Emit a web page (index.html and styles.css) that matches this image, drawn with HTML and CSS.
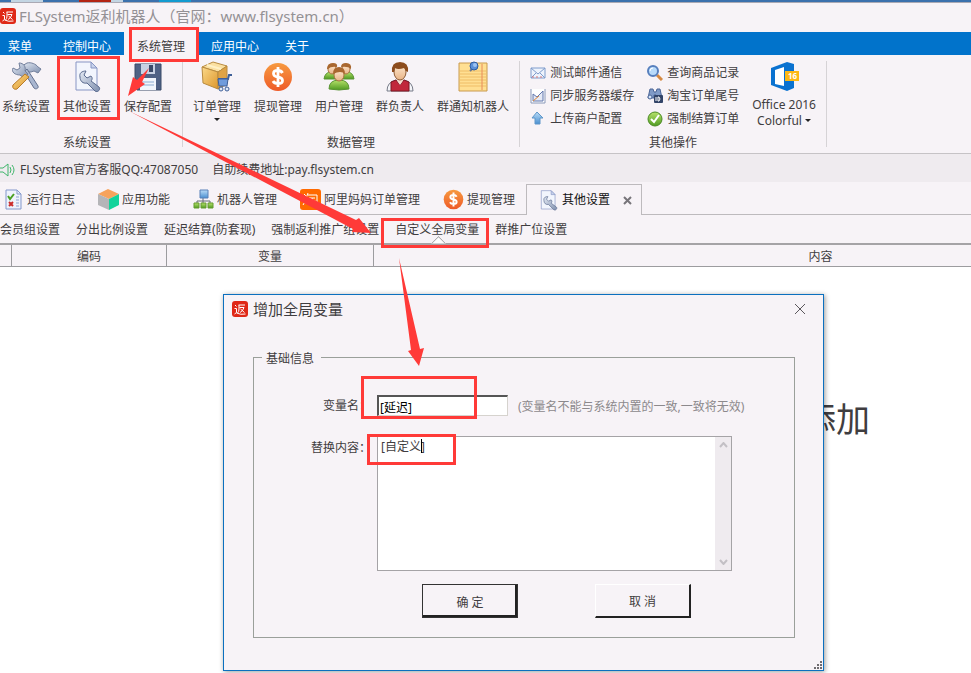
FILE: index.html
```html
<!DOCTYPE html>
<html lang="zh-CN">
<head>
  <meta charset="UTF-8">
  <meta name="viewport" content="width=device-width, initial-scale=1.0">
  <title>FLSystem返利机器人</title>
  <link rel="stylesheet" href="styles.css">
</head>
<body>
  <svg class="defs" width="0" height="0">
    <defs>
      <linearGradient id="steel" x1="0" y1="0" x2="1" y2="1">
        <stop offset="0" stop-color="#e4eaf4"/>
        <stop offset="1" stop-color="#7f8fae"/>
      </linearGradient>
      <linearGradient id="gold" x1="0" y1="0" x2="1" y2="1">
        <stop offset="0" stop-color="#fbd98a"/>
        <stop offset="1" stop-color="#dd962b"/>
      </linearGradient>
      <linearGradient id="skin" x1="0" y1="0" x2="0" y2="1">
        <stop offset="0" stop-color="#ffe9d0"/>
        <stop offset="1" stop-color="#e8b487"/>
      </linearGradient>
      <linearGradient id="sky" x1="0" y1="0" x2="0" y2="1">
        <stop offset="0" stop-color="#b9dcf8"/>
        <stop offset="1" stop-color="#4a8fd0"/>
      </linearGradient>
      <linearGradient id="lime" x1="0" y1="0" x2="0" y2="1">
        <stop offset="0" stop-color="#b7e26a"/>
        <stop offset="1" stop-color="#4f9a22"/>
      </linearGradient>
      <linearGradient id="orange" x1="0" y1="0" x2="0" y2="1">
        <stop offset="0" stop-color="#f79a40"/>
        <stop offset="1" stop-color="#ee5a28"/>
      </linearGradient>
      <symbol id="page-wrench" viewBox="0 0 30 32">
        <path d="M4 1h15l6 6v22H4z" fill="#f2f5fd" stroke="#8795c4"/>
        <path d="M19 1v6h6z" fill="#c9d3ec" stroke="#8795c4"/>
        <path d="M8 16c-1-4 2-6 6-6l-2 4 3 3 4-2c2 2 1 4 0 5l8 6c2 2-1 6-4 4l-8-8c-4 1-7-2-7-6z" fill="url(#steel)" stroke="#5a6a8e"/>
      </symbol>
      <symbol id="dollar" viewBox="0 0 30 30">
        <circle cx="15" cy="15" r="14" fill="url(#orange)"/>
        <path d="M19.500 11c-1-2-2.500-2.500-4.500-2.500-6 0-6 5.500 0 6.500s6 6.500 0 6.500c-2 0-4-.5-5-2.500M15 5v20" fill="none" stroke="#fff" stroke-width="2.800"/>
      </symbol>
      <symbol id="logo" viewBox="0 0 16 16">
        <rect width="16" height="16" rx="3" fill="#df2817"/>
        <path d="M6.500 4h6.500M7 4v4q0 3-1.500 4M7.500 6.500h4.500q-1 3.500-4 5M8.500 8l4 3.500M3 4l1.500 1.500M2.500 7.500h2v4l-2 1.500M4.500 12q4 2 9 1" fill="none" stroke="#fff"/>
      </symbol>
    </defs>
  </svg>

  <div class="desktop-strip"><i class="bit pale"></i><i class="bit red"></i><i class="bit pale short"></i><i class="bit cyan"></i></div>

  <header class="title-bar">
    <svg class="logo" width="16" height="16"><use href="#logo"/></svg>
    <span>FLSystem返利机器人（官网：www.flsystem.cn）</span>
  </header>

  <nav class="menu">
    <a class="menu-item first" href="#">菜单</a>
    <a class="menu-item" href="#">控制中心</a>
    <a class="menu-item active" href="#">系统管理</a>
    <a class="menu-item" href="#">应用中心</a>
    <a class="menu-item" href="#">关于</a>
  </nav>

  <div class="ribbon">
    <section class="group group-first">
      <div class="tools">
        <button class="tool">
          <svg width="32" height="32" viewBox="0 0 32 32">
            <path d="M12 5l5-3c4-1 9 1 11 4l3 2-3 4-4-2-3 1-9 0z" fill="url(#steel)" stroke="#73809c"/>
            <path d="M14 11l3-3 11 17c1 2-2 4-4 2z" fill="#a9b6d0" stroke="#62708f"/>
            <path d="M3 7l4 2 3-2-1-5c5 0 7 4 6 8l3 3-4 4-4-3C5 14 1 11 3 7z" fill="url(#steel)" stroke="#73809c"/>
            <path d="M15 13l4 3L7 28c-3 1-5-1-4-4z" fill="url(#gold)" stroke="#b87b2a"/>
          </svg>
          <span>系统设置</span>
        </button>
        <button class="tool">
          <svg width="32" height="32"><use href="#page-wrench"/></svg>
          <span>其他设置</span>
        </button>
        <button class="tool">
          <svg width="32" height="32" viewBox="0 0 32 32">
            <path d="M3 3h26v26H5l-2-2z" fill="#4f6285" stroke="#3a4a69"/>
            <path d="M9 3h14v10H9z" fill="#c8d2e3"/>
            <path d="M17 4h4v7h-4z" fill="#3a4a69"/>
            <path d="M8 17h16v12H8z" fill="#f1f6fc"/>
            <path d="M10 21h12M10 24h12" stroke="#8bacd2"/>
          </svg>
          <span>保存配置</span>
        </button>
      </div>
      <h2 class="group-title">系统设置</h2>
    </section>

    <section class="group">
      <div class="tools">
        <button class="tool">
          <svg width="32" height="32" viewBox="0 0 32 32">
            <path d="M1 6l11-5 14 4-9 6z" fill="#fbe0a0" stroke="#b98b40"/>
            <path d="M1 6l16 5v17L2 22z" fill="url(#gold)" stroke="#b98b40"/>
            <path d="M17 11l9-6v18l-9 5z" fill="#e0a345" stroke="#b98b40"/>
            <path d="M6 4l14 4" stroke="#fff0c4" stroke-width="2"/>
            <path d="M17 18h10l1-4h3" fill="none" stroke="#3e5f98" stroke-width="2"/>
            <path d="M17 18h10l-1 7h-8z" fill="#6f9bdc" stroke="#3e5f98"/>
            <circle cx="20" cy="28" r="2" fill="#dfe8f7" stroke="#3e5f98"/><circle cx="26" cy="28" r="2" fill="#dfe8f7" stroke="#3e5f98"/>
          </svg>
          <span>订单管理</span>
          <i class="arrow"></i>
        </button>
        <button class="tool">
          <svg width="32" height="32" viewBox="0 0 32 32"><use href="#dollar" x="1" y="1" width="30" height="30"/></svg>
          <span>提现管理</span>
        </button>
        <button class="tool">
          <svg width="32" height="32" viewBox="0 0 32 32">
            <path d="M1 18q1-7 7-7t7 7zM17 18q1-7 7-7t7 7z" fill="url(#lime)" stroke="#5a9434"/>
            <ellipse cx="9" cy="8" rx="4" ry="5" fill="url(#skin)" stroke="#a9703f"/>
            <ellipse cx="23" cy="8" rx="4" ry="5" fill="url(#skin)" stroke="#a9703f"/>
            <path d="M4 8q0-6 6-6 5 0 4 4-6-1-9 2zM18 6q0-4 5-4 6 0 5 6-3-3-10-2z" fill="#a9672f"/>
            <path d="M6 28q0-9 10-9t10 9q-10 2-20 0z" fill="url(#lime)" stroke="#5a9434"/>
            <ellipse cx="16" cy="14" rx="5" ry="6" fill="url(#skin)" stroke="#a9703f"/>
            <path d="M10 13q0-7 6-7t6 7q-4-4-12 0z" fill="#a9672f"/>
          </svg>
          <span>用户管理</span>
        </button>
        <button class="tool">
          <svg width="32" height="32" viewBox="0 0 32 32">
            <path d="M3 30q0-9 9-11h8q9 2 9 11z" fill="#f4f4f8" stroke="#777b88"/>
            <path d="M7 30v-9l5-2 4 5 4-5 5 2v9z" fill="#c1283b" stroke="#7c1723"/>
            <path d="M12 18h8l-4 6z" fill="#f7ded0"/>
            <ellipse cx="16" cy="11" rx="6" ry="8" fill="url(#skin)" stroke="#8b5a34"/>
            <path d="M8 11q-1-10 8-10t8 10l-2-1-2-3q-6 2-9 0l-1 4z" fill="#8c4c1d"/>
          </svg>
          <span>群负责人</span>
        </button>
        <button class="tool">
          <svg width="32" height="32" viewBox="0 0 32 32">
            <path d="M2 2h28v28H2z" fill="#ffdf92" stroke="#c99a4e"/>
            <path d="M3 10h26M3 13h26M3 16h26M3 19h26M3 22h26M3 25h26" stroke="#efbd66"/>
            <path d="M25 3v26" stroke="#e88c5c"/>
            <path d="M16 7l-3 3" stroke="#6b7890" stroke-width="2"/>
            <circle cx="17" cy="5" r="4" fill="#5b91d8" stroke="#2e5da3"/>
            <circle cx="18" cy="4" r="2" fill="#9cc3f2"/>
          </svg>
          <span>群通知机器人</span>
        </button>
      </div>
      <h2 class="group-title">数据管理</h2>
    </section>

    <section class="group">
      <div class="tools">
        <div class="links">
          <button class="link">
            <svg width="16" height="16" viewBox="0 0 16 16"><path d="M1 3h14v10H1z" fill="#eef3fc" stroke="#7f9ccc"/><path d="M1 3l7 6 7-6M1 13l5-5M15 13l-5-5" fill="none" stroke="#7f9ccc"/><path d="M2 12h12" stroke="#d77" stroke-dasharray="2 2"/></svg>
            测试邮件通信
          </button>
          <button class="link">
            <svg width="16" height="16" viewBox="0 0 16 16"><path d="M1 1v14h14V1" fill="#fff" stroke="#8a99b9"/><path d="M3 6l4 3 6-6v10H3z" fill="#e5eaf6" stroke="#6177ad"/><path d="M3 13l6-5" stroke="#e38a3b"/></svg>
            同步服务器缓存
          </button>
          <button class="link">
            <svg width="16" height="16" viewBox="0 0 16 16"><path d="M7 1l6 6h-3v6H5V7H2z" fill="url(#sky)" stroke="#5f96c9"/></svg>
            上传商户配置
          </button>
        </div>
        <div class="links">
          <button class="link">
            <svg width="16" height="16" viewBox="0 0 16 16"><path d="M10 10l5 5" stroke="#d68a43" stroke-width="3"/><circle cx="6" cy="6" r="5" fill="#b9dbfb" stroke="#577fbd" stroke-width="2"/><path d="M3 6q0-3 3-3" stroke="#fff" fill="none"/></svg>
            查询商品记录
          </button>
          <button class="link">
            <svg width="16" height="16" viewBox="0 0 16 16"><path d="M3 1h3l1 3h2l1-3h3l2 9H9V7H7v3H1z" fill="#7f9ac7" stroke="#4a6496"/><circle cx="3" cy="9" r="2" fill="#d5e5f8" stroke="#4a6496"/><rect x="7" y="7" width="9" height="8" rx="1" fill="#324468"/><path d="M9 9v4M11 9v4h1q2-2 0-4z" stroke="#fff" fill="none"/></svg>
            淘宝订单尾号
          </button>
          <button class="link">
            <svg width="16" height="16" viewBox="0 0 16 16"><circle cx="8" cy="8" r="7" fill="url(#lime)" stroke="#4b8a24"/><path d="M4 8l3 3 5-7" fill="none" stroke="#fff" stroke-width="2"/></svg>
            强制结算订单
          </button>
        </div>
        <button class="tool skin">
          <svg width="32" height="32" viewBox="0 0 32 32">
            <path d="M3 7l16-6 7 2v24l-7 3-16-6z" fill="#0a72d0"/>
            <path d="M7 9l9-3v19l-9-2z" fill="#fff"/>
            <path d="M17 10h14v10H17z" fill="#fdb813"/>
            <text x="20" y="18" class="badge-text">16</text>
          </svg>
          <span>Office 2016</span>
          <span>Colorful <i class="arrow inline"></i></span>
        </button>
      </div>
      <h2 class="group-title">其他操作</h2>
    </section>
  </div>

  <div class="notice">
    <svg width="16" height="16" viewBox="0 0 16 16"><path d="M0 6h3l5-4v12l-5-4H0M10 5q2 3 0 6M12 3q4 5 0 10" fill="none" stroke="#3fb56b"/></svg>
    <span>FLSystem官方客服QQ:47087050</span>
    <span class="renew">自助续费地址:pay.flsystem.cn</span>
  </div>

  <nav class="tabs">
    <a class="tab" href="#">
      <svg width="21" height="21" viewBox="0 0 21 21"><path d="M3 1h11l4 4v15H3z" fill="#eef2fc" stroke="#8397cb"/><path d="M14 1v4h4" fill="none" stroke="#8397cb"/><path d="M5 7l2 3 4-5" fill="none" stroke="#4ba024" stroke-width="2"/><path d="M6 13l4 4M10 13l-4 4" stroke="#cb2a2a" stroke-width="2"/><path d="M13 8h3M13 11h3M13 14h3M13 17h3" stroke="#8da1d1"/></svg>
      运行日志
    </a>
    <a class="tab" href="#">
      <svg width="21" height="21" viewBox="0 0 21 21"><path d="M0 5l10-5 11 5-10 5z" fill="#f7a35c"/><path d="M0 5l11 5v11L0 16z" fill="#b5b5b8"/><path d="M21 5l-10 5v11l10-5z" fill="#13d39b"/></svg>
      应用功能
    </a>
    <a class="tab" href="#">
      <svg width="21" height="21" viewBox="0 0 21 21"><path d="M10 8v4M4 15v-3h13v3M10 12v3" fill="none" stroke="#666b75"/><path d="M7 1h8v8H7z" fill="url(#sky)" stroke="#5880b8"/><path d="M1 14h5v5H1zM8 14h5v5H8zM15 14h5v5h-5z" fill="url(#lime)" stroke="#659b2e"/></svg>
      机器人管理
    </a>
    <a class="tab" href="#">
      <svg width="21" height="21" viewBox="0 0 21 21"><rect width="21" height="21" rx="3" fill="#ff6a00"/><path d="M4 5l2 2M3 9l2 1M3 16l3-5M8 4L6.500 8M8 6h9v10h-3M9 9h6M8.500 12h7M12 9v6M9.500 13v2h5v-2" fill="none" stroke="#fff"/></svg>
      阿里妈妈订单管理
    </a>
    <a class="tab" href="#">
      <svg width="21" height="21"><use href="#dollar"/></svg>
      提现管理
    </a>
    <a class="tab active" href="#">
      <svg width="21" height="21"><use href="#page-wrench"/></svg>
      其他设置
      <svg class="tab-close" width="9" height="9" viewBox="0 0 9 9"><path d="M1 1l7 7M8 1L1 8" stroke="#77747a" stroke-width="2"/></svg>
    </a>
  </nav>

  <nav class="subtabs">
    <a href="#">会员组设置</a>
    <a href="#">分出比例设置</a>
    <a href="#">延迟结算(防套现)</a>
    <a href="#">强制返利推广组设置</a>
    <a class="current" href="#">自定义全局变量</a>
    <a href="#">群推广位设置</a>
  </nav>

  <main class="content">
    <table class="grid">
      <thead>
        <tr>
          <th class="col-mark"></th>
          <th class="col-code">编码</th>
          <th class="col-name">变量</th>
          <th class="col-value">内容</th>
        </tr>
      </thead>
    </table>
    <p class="empty-tip">添加</p>
  </main>

  <div class="dialog" role="dialog" aria-labelledby="dialog-title">
    <div class="dialog-title">
      <svg width="16" height="16"><use href="#logo"/></svg>
      <span id="dialog-title">增加全局变量</span>
      <button class="dialog-close" aria-label="关闭">
        <svg width="12" height="12" viewBox="0 0 12 12"><path d="M1 1l10 10M11 1L1 11" stroke="#5b585c"/></svg>
      </button>
    </div>
    <form class="dialog-form">
      <fieldset>
        <legend>基础信息</legend>
        <div class="row">
          <label for="var-name">变量名：</label>
          <input id="var-name" class="name-input" type="text" value="[延迟]">
          <span class="note">(变量名不能与系统内置的一致,一致将无效)</span>
        </div>
        <div class="row row-top">
          <label for="var-value">替换内容：</label>
          <div class="memo">
            <textarea id="var-value">[自定义]</textarea>
            <div class="scroll">
              <svg width="9" height="6" viewBox="0 0 9 6"><path d="M1 5l3.500-4L8 5" fill="none" stroke="#c3c0c5" stroke-width="2"/></svg>
              <svg width="9" height="6" viewBox="0 0 9 6"><path d="M1 1l3.500 4L8 1" fill="none" stroke="#c3c0c5" stroke-width="2"/></svg>
            </div>
            <i class="caret"></i>
          </div>
        </div>
        <div class="buttons">
          <button class="btn btn-default" type="button">确 定</button>
          <button class="btn" type="button">取 消</button>
        </div>
      </fieldset>
    </form>
    <svg class="grip" width="9" height="9" viewBox="0 0 9 9"><path d="M6 0h2v2H6zM3 3h2v2H3zM6 3h2v2H6zM0 6h2v2H0zM3 6h2v2H3zM6 6h2v2H6z" fill="#6f6c70"/></svg>
  </div>

  <!-- step marks drawn over the window -->
  <svg class="marks" width="971" height="673" viewBox="0 0 971 673">
    <g fill="none" stroke="#ff3a38" stroke-width="3">
      <rect x="130.500" y="28.500" width="67" height="32"/>
      <rect x="58.500" y="57.500" width="60" height="61"/>
      <rect x="382.500" y="219.500" width="105" height="27"/>
      <rect x="362.500" y="377.500" width="113" height="40"/>
      <rect x="368.500" y="435.500" width="86" height="28"/>
    </g>
    <g fill="#ff3a38">
      <path d="M149 68l-12 12-4-3-5 19 17-12-3-2z"/>
      <path d="M129 111l227 109 3-2 12 15-19-1 1-3z"/>
      <path d="M399 258l21 91 4-1-5 18-11-15 3-1z"/>
    </g>
  </svg>
</body>
</html>
```
FILE: styles.css
```css
* {
  box-sizing: border-box;
}

body {
  margin: 0;
  min-height: 100vh;
  display: flex;
  flex-direction: column;
  overflow: hidden;
  font-family: "Noto Sans", "Noto Sans CJK SC", sans-serif;
  font-size: 12px;
  line-height: 16px;
  color: #3f3d40;
  background-color: #f7f3f7;
}

a {
  color: inherit;
  text-decoration: none;
  white-space: nowrap;
}

button {
  padding: 0;
  border: 0;
  background: none;
  font: inherit;
  color: inherit;
}

svg {
  display: block;
  flex: none;
}

.defs {
  position: absolute;
}

/* top edge */
.desktop-strip {
  display: flex;
  height: 3px;
  padding-left: 11px;
  background-color: #3b71ad;
  border-bottom: 1px solid #aaa9b4;
}

.bit {
  width: 32px;
  margin-right: 36px;
}

.bit.pale {
  background-color: #c3d5e3;
}

.bit.red {
  margin-right: 0;
  background-color: #b32413;
}

.bit.short {
  width: 12px;
}

.bit.cyan {
  background-color: #139bd0;
}

.title-bar {
  display: flex;
  align-items: center;
  gap: 3px;
  height: 29px;
  padding-bottom: 3px;
  font-size: 15px;
  line-height: 20px;
  color: #949195;
}

.menu {
  display: flex;
  height: 23px;
  color: #fff;
  background-color: #0173cb;
}

.menu-item {
  padding: 7px 13px 0;
}

.menu-item.first {
  padding: 7px 18px 0 8px;
}

.menu-item.active {
  color: #3f3d40;
  background-color: #f7f3f7;
}

/* ribbon */
.ribbon {
  display: flex;
  padding: 6px 0;
  border-bottom: 1px solid #c6c3c6;
}

.group {
  display: flex;
  flex-direction: column;
  justify-content: space-between;
  height: 86px;
  padding: 0 10px;
  border-right: 1px solid #d6d3d6;
}

.group-first {
  padding-left: 2px;
}

.tools {
  display: flex;
  gap: 13px;
  height: 70px;
}

.tool {
  display: flex;
  flex-direction: column;
  align-items: center;
}

.tool span {
  margin-top: 6px;
  white-space: nowrap;
}

.tool.skin span {
  margin-top: 4px;
}

.tool.skin span + span {
  margin-top: 0;
}

.badge-text {
  font-size: 8px;
  font-weight: bold;
  fill: #fff;
}

.arrow {
  margin-top: 3px;
  border: 3px solid transparent;
  border-top-color: #222;
  border-bottom: 0;
}

.arrow.inline {
  display: inline-block;
  vertical-align: 3px;
}

.links {
  display: flex;
  flex-direction: column;
}

.link {
  display: flex;
  align-items: center;
  gap: 4px;
  height: 23px;
  white-space: nowrap;
}

.group-title {
  margin: 0;
  font-size: 12px;
  font-weight: normal;
  line-height: 16px;
  height: 12px;
  text-align: center;
}

.notice {
  display: flex;
  align-items: center;
  gap: 4px;
  height: 28px;
  padding-top: 4px;
  background-color: #efebef;
}

.renew {
  margin-left: 10px;
}

/* page tabs */
.tabs {
  display: flex;
  height: 33px;
  padding-top: 2px;
  border-bottom: 1px solid #bdbabd;
}

.tab {
  display: flex;
  align-items: center;
  gap: 3px;
  padding: 1px 11px 0 12px;
}

.tab:first-child {
  padding-left: 3px;
}

.tab.active {
  height: 31px;
  padding: 0 9px 0 11px;
  border: 1px solid #bdbabd;
  border-bottom: 0;
  color: #111;
  background-color: #f7f3f7;
}

.tab-close {
  margin-left: 10px;
}

.subtabs {
  display: flex;
  gap: 16px;
  height: 30px;
  line-height: 30px;
  border-bottom: 2px solid #a5a3a6;
}

.subtabs .current {
  position: relative;
}

.subtabs .current::after {
  content: "";
  position: absolute;
  left: 50%;
  bottom: -6px;
  width: 9px;
  height: 9px;
  margin-left: -4px;
  border: 1px solid #a5a3a6;
  background-color: #fff;
  transform: rotate(45deg);
  clip-path: polygon(0 0, 100% 0, 0 100%);
}

.content {
  flex: 1;
  background-color: #fff;
}

.grid {
  width: 100%;
  table-layout: fixed;
  border-collapse: separate;
  border-spacing: 0;
}

.grid th {
  height: 22px;
  padding: 3px 0 0;
  border-right: 1px solid #9c9c9f;
  border-bottom: 1px solid #9c9c9f;
  font-weight: normal;
  background-color: #f7f3f7;
}

.grid .col-mark {
  width: 12px;
}

.grid .col-code {
  width: 155px;
}

.grid .col-name {
  width: 207px;
}

.grid .col-value {
  padding-left: 296px;
  border-right: 0;
}

.empty-tip {
  margin: 128px 101px 0 0;
  font-size: 34px;
  line-height: 48px;
  text-align: right;
}

/* dialog */
.dialog {
  position: absolute;
  left: 223px;
  top: 294px;
  width: 601px;
  border: 1px solid #0b70bf;
  background-color: #f7f3f7;
  box-shadow: 1px 1px 5px rgba(0, 0, 0, .4);
}

.dialog-title {
  display: flex;
  align-items: center;
  gap: 5px;
  height: 28px;
  padding: 0 17px 0 8px;
  font-size: 15px;
  line-height: 20px;
}

.dialog-close {
  margin-left: auto;
}

.dialog-form {
  padding: 26px 28px 32px 29px;
}

fieldset {
  min-width: 0;
  margin: 0;
  padding: 0 8px 19px;
  border: 1px solid #9a9f9a;
}

legend {
  height: 16px;
  padding: 0 7px 0 4px;
  line-height: 20px;
}

.row {
  display: flex;
  align-items: center;
  gap: 6px;
  margin-top: 29px;
  padding: 0 54px 0 49px;
}

.row-top {
  align-items: flex-start;
  margin-top: 20px;
}

.row label {
  width: 60px;
  flex: none;
  line-height: 20px;
  padding-top: 2px;
  text-align: right;
}

.row .name-input {
  width: 131px;
  height: 21px;
  padding: 2px 0 0 1px;
  border: 2px solid #555;
  border-right: 1px solid #d6d3ce;
  border-bottom: 1px solid #d6d3ce;
  font: inherit;
  color: #000;
  outline: none;
}

.note {
  margin-left: 4px;
  padding-top: 4px;
  color: #8c898c;
  white-space: nowrap;
}

.memo {
  position: relative;
  display: flex;
  flex: 1;
  height: 135px;
  border: 1px solid #a5a3a6;
  background-color: #fff;
}

.memo textarea {
  flex: 1;
  min-width: 0;
  padding: 2px 3px;
  border: 0;
  font: inherit;
  color: inherit;
  resize: none;
  outline: none;
}

.scroll {
  display: flex;
  flex-direction: column;
  justify-content: space-between;
  align-items: center;
  width: 16px;
  padding: 5px 0;
  background-color: #efebef;
}

.caret {
  position: absolute;
  left: 43px;
  top: 2px;
  width: 1px;
  height: 14px;
  background-color: #000;
}

.buttons {
  display: flex;
  gap: 77px;
  margin-top: 13px;
  padding-left: 160px;
}

.btn {
  width: 96px;
  height: 34px;
  padding-top: 3px;
  border: 1px solid #fff;
  border-right: 2px solid #222;
  border-bottom: 2px solid #222;
}

.btn-default {
  border: 1px solid #333;
  box-shadow: inset -2px -2px 0 #222;
}

.grip {
  position: absolute;
  right: 0;
  bottom: 0;
}

.marks {
  position: absolute;
  left: 0;
  top: 0;
  pointer-events: none;
}
```
